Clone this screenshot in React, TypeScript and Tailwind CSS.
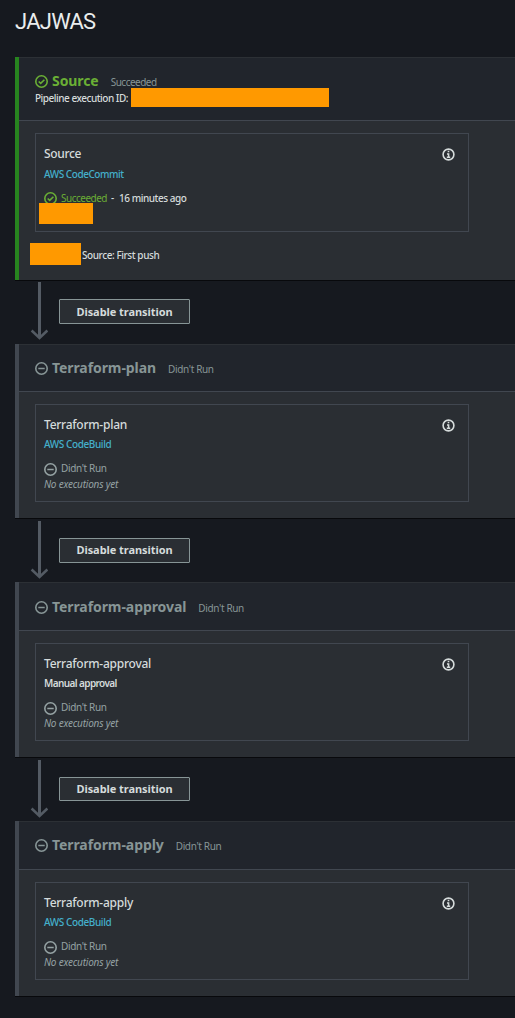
type Status = "ok" | "idle";

function StatusIcon({ status, className }: { status: Status; className: string }) {
  return (
    <svg viewBox="0 0 13 13" fill="none" stroke="currentColor" className={className}>
      <circle cx="6.5" cy="6.5" r="5.7" strokeWidth="1.6" />
      {status === "ok" ? <path d="M3.7 6.5 5.7 8.4 9.4 4.7" strokeWidth="1.6" /> : <path d="M3.3 6.5h6.4" strokeWidth="1.5" />}
    </svg>
  );
}

function InfoIcon() {
  return (
    <svg viewBox="0 0 13 13" fill="none" stroke="currentColor" className="mt-[14px] mr-[13px] h-[13px] w-[13px] shrink-0 text-[#d5dbdb]">
      <circle cx="6.5" cy="6.5" r="5.4" strokeWidth="1.6" />
      <path d="M5.7 3.6h1.6M5 6h1.6v3.2M4.8 9.2h3.4" strokeWidth="1.5" />
    </svg>
  );
}

function Transition({ className, buttonClass }: { className: string; buttonClass: string }) {
  return (
    <div className={`flex shrink-0 pl-[30px] ${className}`}>
      <svg viewBox="0 0 18 60" fill="none" stroke="#545b64" className="mt-[1px] h-[60px] w-[18px] shrink-0">
        <path d="M9.5 1v55" strokeWidth="3" />
        <path d="M1.6 49.5 9.5 57l7.9-7.5" strokeWidth="2.5" />
      </svg>
      <button className={`mt-[19px] ml-[11px] flex w-[131px] justify-center rounded-[1px] border border-[#879596] bg-[#2a2e33] text-[11px] font-bold tracking-[-0.06px] text-[#d5dbdb] ${buttonClass}`}>
        Disable transition
      </button>
    </div>
  );
}

function StageTitle({ name, status }: { name: string; status: Status }) {
  const ok = status === "ok";
  return (
    <div className={`flex h-[20px] items-baseline leading-[20px] ${ok ? "text-[#6aaf35]" : "text-[#879596]"}`}>
      <StatusIcon status={status} className="h-[13px] w-[13px] shrink-0 translate-y-[2px]" />
      <h2 className="ml-[4px] text-[14px] font-bold tracking-[-0.08px] whitespace-nowrap">{name}</h2>
      <span className={`ml-[12px] text-[10px] whitespace-nowrap text-[#879596] ${ok ? "tracking-[-0.5px]" : "tracking-[-0.35px]"}`}>
        {ok ? "Succeeded" : "Didn't Run"}
      </span>
    </div>
  );
}

function IdleStage({ name, provider, manual, className, headerClass }: {
  name: string; provider: string; manual?: boolean; className: string; headerClass: string;
}) {
  return (
    <section className={`ml-[15px] shrink-0 border-l-4 border-[#414750] bg-[#2a2e33] shadow-[0_1px_0_#08090c] ${className}`}>
      <header className={`border-t border-b border-t-[#2c3035] border-b-[#414750] bg-[#21252c] pl-[16px] ${headerClass}`}>
        <StageTitle name={name} status="idle" />
      </header>
      <div className="mt-[12px] ml-[16px] flex h-[98px] w-[434px] justify-between border border-[#414750] pl-[8px]">
        <div className="pt-[11px]">
          <h3 className="h-[20px] text-[12px] leading-[18px] font-medium tracking-[-0.25px] text-[#d5dbdb]">{name}</h3>
          <p className={`h-[24px] text-[10px] leading-[16px] ${manual ? "font-semibold tracking-[-0.6px] text-[#d5dbdb]" : "font-medium tracking-[-0.4px] text-[#44b0cb]"}`}>{provider}</p>
          <p className="flex h-[16px] items-center gap-[4px] text-[10px] leading-[16px] tracking-[-0.35px] text-[#95a2a3]">
            <StatusIcon status="idle" className="h-[13px] w-[13px] translate-y-[1px]" />
            Didn't Run
          </p>
          <p className="text-[10px] leading-[16px] tracking-[-0.2px] text-[#95a2a3] italic">No executions yet</p>
        </div>
        <InfoIcon />
      </div>
    </section>
  );
}

export default function App() {
  return (
    <main className="flex h-[1018px] w-[515px] flex-col overflow-hidden bg-[#16191f] font-['Noto_Sans','Open_Sans',sans-serif]">
      <h1 className="h-[57px] pt-[7px] pl-[15px] font-['Roboto','Noto_Sans',sans-serif] text-[22px] leading-[30px] tracking-[-0.75px] text-[#eaeded]">JAJWAS</h1>
      <section className="ml-[15px] h-[223px] shrink-0 border-l-4 border-[#27841f] bg-[#2a2e33] shadow-[0_1px_0_#08090c]">
        <header className="h-[64px] border-t border-b border-t-[#2c3035] border-b-[#414750] bg-[#21252c] pt-[13px] pl-[16px]">
          <StageTitle name="Source" status="ok" />
          <div className="-mt-[1px] flex text-[10px] leading-[16px] font-medium tracking-[-0.48px] text-[#d5dbdb]">
            <span className="w-[96px] whitespace-nowrap">Pipeline execution ID:</span>
            <span className="-mt-[2px] h-[19px] w-[198px] bg-[#ff9900]" />
          </div>
        </header>
        <div className="mt-[12px] ml-[16px] flex h-[99px] w-[434px] justify-between border border-[#414750] pl-[8px]">
          <div className="pt-[11px]">
            <h3 className="h-[21px] text-[12px] leading-[18px] font-medium tracking-[-0.35px] text-[#d5dbdb]">Source</h3>
            <p className="h-[24px] text-[10px] leading-[16px] font-medium tracking-[-0.45px] text-[#44b0cb]">AWS CodeCommit</p>
            <p className="flex h-[13px] items-start text-[10px] leading-[16px] tracking-[-0.45px] text-[#d5dbdb]">
              <StatusIcon status="ok" className="mt-[2px] mr-[4px] h-[13px] w-[13px] text-[#6aaf35]" />
              <span className="tracking-[-0.5px] text-[#6aaf35]">Succeeded</span>
              <span className="mx-[4px] w-[4px] font-medium">-</span>
              <span className="font-medium">16 minutes ago</span>
            </p>
            <div className="relative -ml-[5px] h-[21px] w-[54px] bg-[#ff9900]" />
          </div>
          <InfoIcon />
        </div>
        <div className="mt-[11px] ml-[11px] flex items-center text-[10px] leading-[16px] font-medium tracking-[-0.43px] text-[#d5dbdb]">
          <span className="h-[22px] w-[51px] bg-[#ff9900]" />
          <span className="ml-[1px] translate-y-[1px]">Source: First push</span>
        </div>
      </section>
      <Transition className="h-[64px]" buttonClass="h-[25px] leading-[23px]" />
      <IdleStage name="Terraform-plan" provider="AWS CodeBuild" className="h-[174px]" headerClass="h-[48px] pt-[13px]" />
      <Transition className="h-[64px] pt-[1px]" buttonClass="h-[25px] leading-[21px]" />
      <IdleStage name="Terraform-approval" provider="Manual approval" manual className="h-[175px]" headerClass="h-[49px] pt-[14px]" />
      <Transition className="h-[64px] pt-[1px]" buttonClass="h-[24px] leading-[21px]" />
      <IdleStage name="Terraform-apply" provider="AWS CodeBuild" className="h-[175px]" headerClass="h-[49px] pt-[13px]" />
    </main>
  );
}
